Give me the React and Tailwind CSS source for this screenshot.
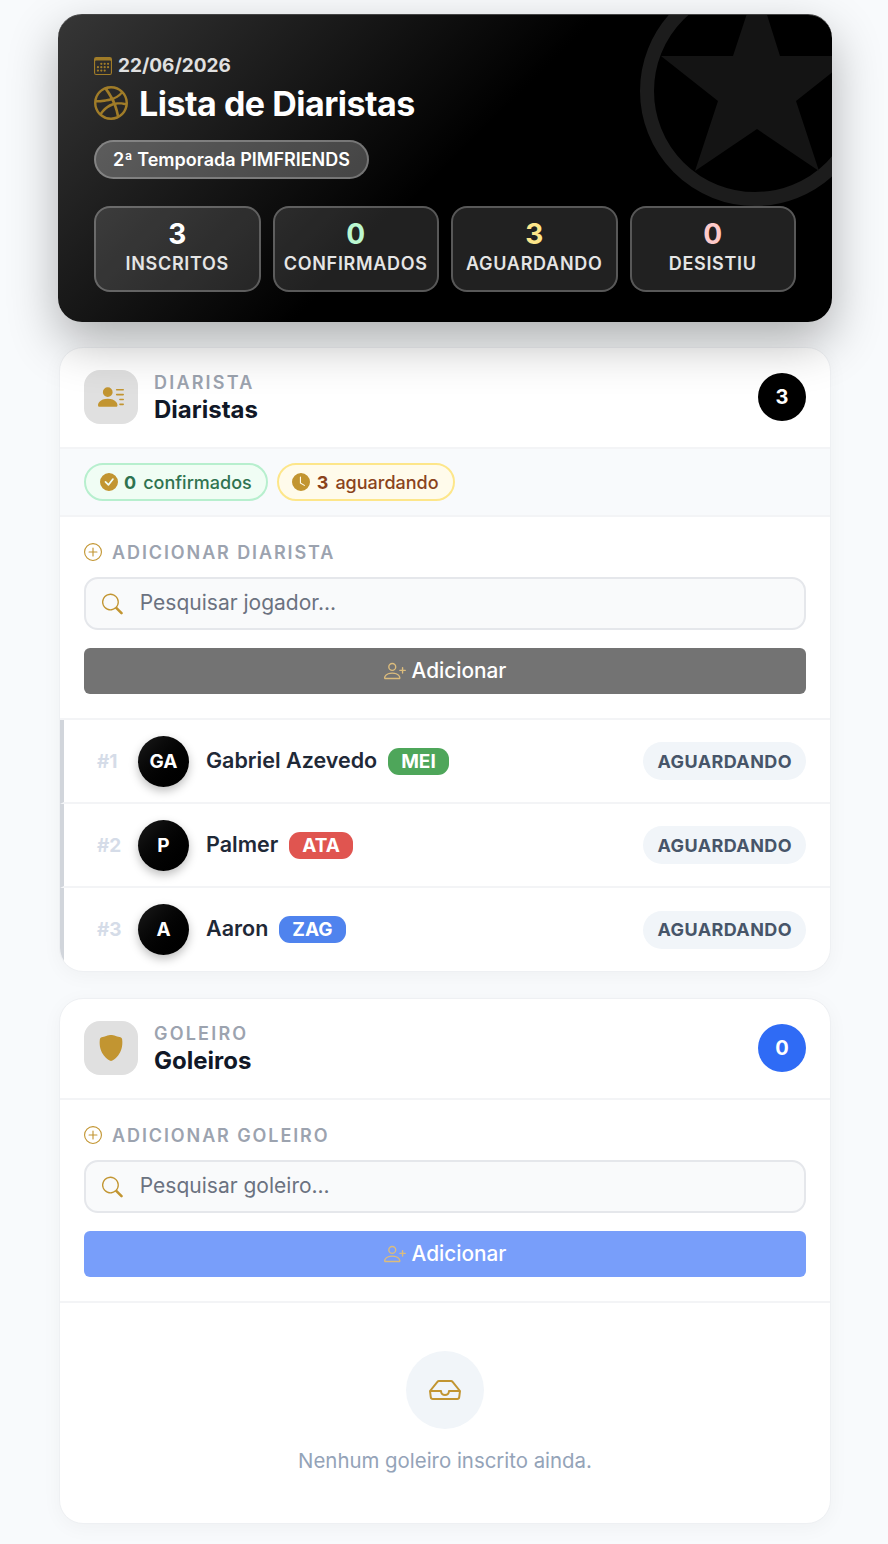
import {
  BsCalendar3,
  BsCheckCircleFill,
  BsClockFill,
  BsDribbble,
  BsInbox,
  BsPersonLinesFill,
  BsPersonPlus,
  BsPlusCircle,
  BsSearch,
  BsShieldFill,
} from "react-icons/bs";

const stats = [
  { value: "3", label: "INSCRITOS", color: "text-white" },
  { value: "0", label: "CONFIRMADOS", color: "text-[#bbf7d0]" },
  { value: "3", label: "AGUARDANDO", color: "text-[#fde68a]" },
  { value: "0", label: "DESISTIU", color: "text-[#fecaca]" },
];

const players = [
  { pos: "#1", initials: "GA", name: "Gabriel Azevedo", tag: "MEI", tagColor: "bg-[#4ea65a]" },
  { pos: "#2", initials: "P", name: "Palmer", tag: "ATA", tagColor: "bg-[#e05550]" },
  { pos: "#3", initials: "A", name: "Aaron", tag: "ZAG", tagColor: "bg-[#4f83ee]" },
];

function CardHeader({ icon, kicker, title, count, countColor }) {
  return (
    <div className="flex h-[101px] items-center justify-between border-b-2 border-[#f3f4f6] px-6 pb-px">
      <div className="flex items-center gap-4">
        <div className="flex h-[54px] w-[54px] items-center justify-center rounded-2xl bg-[#e0e0e0] text-[#c29531]">
          {icon}
        </div>
        <div className="pt-[2px]">
          <div className="text-[18px] leading-[24px] font-semibold tracking-[2.2px] text-[#9ca3af]">{kicker}</div>
          <div className="text-[24px] leading-[30px] font-bold text-[#111827]">{title}</div>
        </div>
      </div>
      <div className={`flex h-12 w-12 items-center justify-center rounded-full text-[20px] font-bold text-white ${countColor}`}>
        {count}
      </div>
    </div>
  );
}

function AddForm({ label, placeholder, buttonColor }) {
  return (
    <div className="border-b-2 border-[#f3f4f6] px-6 pt-[23px] pb-[24px]">
      <div className="flex h-[24px] items-center gap-[10px] text-[18px] font-semibold tracking-[1.9px] text-[#9ca3af]">
        <BsPlusCircle className="text-[18px] text-[#c29531]" />
        {label}
      </div>
      <div className="mt-[13px] flex h-[53px] items-center rounded-[14px] border-2 border-[#e5e7eb] bg-[#f9fafb] pl-4">
        <BsSearch className="h-[22px] w-[22px] text-[#c29531]" />
        <input
          className="ml-[17px] w-full bg-transparent pb-[2px] text-[21px] text-[#374151] outline-none placeholder:text-[#6b7280]"
          placeholder={placeholder}
        />
      </div>
      <button className={`mt-[18px] flex h-[46px] w-full items-center justify-center gap-[6px] rounded-[6px] text-[20.8px] font-medium text-white ${buttonColor}`}>
        <BsPersonPlus className="h-[22px] w-[22px] text-[#dcbc7c]" />
        Adicionar
      </button>
    </div>
  );
}

export default function App() {
  return (
    <div className="min-h-screen bg-[#f8fafc] pt-[14px] pr-[56px] pb-5 pl-[58px] font-['Inter',sans-serif]">
      {/* Hero */}
      <section className="relative h-[308px] overflow-hidden rounded-[24px] border-t border-[#444] bg-[linear-gradient(135deg,#363636_0%,#000_50%)] px-9 pt-[39px] shadow-[0_20px_50px_rgba(0,0,0,0.3)]">
        <svg className="absolute top-[-40px] left-[574px] h-[240px] w-[240px]" viewBox="632 -26 240 240">
          <circle cx="755" cy="90" r="108" fill="none" stroke="#1c1c1c" strokeWidth="14" />
          <polygon
            fill="#141414"
            points="757,-18 780,55 853,55 796,100 819,170 757,128 695,170 718,100 661,55 733,55"
          />
        </svg>
        <div className="relative">
          <div className="flex h-[24px] items-center gap-[6px] text-[19px] font-bold text-[#e0e0e0]">
            <BsCalendar3 className="h-[18px] w-[18px] text-[#a07c28]" />
            22/06/2026
          </div>
          <h1 className="mt-[4px] flex h-[42px] items-center gap-[11px] text-[34px] font-bold tracking-[-0.5px] text-white">
            <BsDribbble className="h-[34px] w-[34px] text-[#a07c28]" />
            Lista de Diaristas
          </h1>
          <div className="mt-[16px] inline-flex h-[39px] items-center rounded-full border-2 border-white/25 bg-white/25 px-[17px] text-[18px] font-semibold text-white">
            2ª Temporada PIMFRIENDS
          </div>
          <div className="mt-[27px] grid grid-cols-4 gap-3">
            {stats.map((s) => (
              <div
                key={s.label}
                className="flex h-[86px] flex-col items-center justify-center rounded-2xl border-2 border-white/25 bg-white/13 pb-[5px]"
              >
                <div className={`text-[28px] leading-[34px] font-bold ${s.color}`}>{s.value}</div>
                <div className="mt-[1px] text-[18px] leading-[24px] font-semibold tracking-[0.7px] whitespace-nowrap text-[#e5e5e5]">
                  {s.label}
                </div>
              </div>
            ))}
          </div>
        </div>
      </section>

      {/* Diaristas */}
      <section className="mx-px mt-[25px] overflow-hidden rounded-[24px] border border-[#eef0f3] bg-white shadow-[0_4px_20px_rgba(0,0,0,0.04)]">
        <CardHeader
          icon={<BsPersonLinesFill className="h-[26px] w-[26px]" />}
          kicker="DIARISTA"
          title="Diaristas"
          count="3"
          countColor="bg-black"
        />
        <div className="flex h-[68px] items-center gap-[9px] border-b-2 border-[#f3f4f6] bg-[#f8fafc] px-6">
          <div className="flex h-[38px] items-center gap-[7px] rounded-full border-2 border-[#b7efce] bg-[#f0fdf4] px-[14px] text-[18px] text-[#2f7350]">
            <BsCheckCircleFill className="mr-[-1px] h-[18px] w-[18px] text-[#c29531]" />
            <span className="font-bold">0</span>
            <span className="font-medium">confirmados</span>
          </div>
          <div className="flex h-[38px] items-center gap-[7px] rounded-full border-2 border-[#fde68a] bg-[#fffbeb] pr-[14px] pl-[13px] text-[18px] text-[#8a431c]">
            <BsClockFill className="h-[18px] w-[18px] text-[#c29531]" />
            <span className="font-bold">3</span>
            <span className="font-medium">aguardando</span>
          </div>
        </div>
        <AddForm label="ADICIONAR DIARISTA" placeholder="Pesquisar jogador..." buttonColor="bg-[#737373]" />
        {players.map((p, i) => (
          <div
            key={p.pos}
            className={`flex items-center border-l-4 border-[#d1d5db] pr-6 pl-[33px] ${i < 2 ? "h-[84px] border-b-2 border-b-[#f3f4f6]" : "h-[83px]"}`}
          >
            <span className="w-[41px] pt-[2px] text-[19px] font-bold text-[#d5dce8]">{p.pos}</span>
            <div className="flex h-[51px] w-[51px] items-center justify-center rounded-full bg-gradient-to-br from-[#1a1a1a] to-black pt-[2px] text-[19px] font-bold text-white shadow-[0_4px_10px_rgba(0,0,0,0.25)]">
              {p.initials}
            </div>
            <span className="mb-[2px] ml-[17px] text-[21.5px] font-semibold text-[#1f2937]">{p.name}</span>
            <span className={`ml-[11px] flex h-[27px] items-center rounded-[11px] px-[13px] pt-[2px] text-[19px] font-bold text-white ${p.tagColor}`}>
              {p.tag}
            </span>
            <span className="ml-auto flex h-[38px] items-center rounded-full bg-[#f1f5f9] px-[14px] text-[18px] font-bold tracking-[0.4px] text-[#475569]">
              AGUARDANDO
            </span>
          </div>
        ))}
      </section>

      {/* Goleiros */}
      <section className="mx-px mt-[26px] overflow-hidden rounded-[24px] border border-[#eef0f3] bg-white shadow-[0_4px_20px_rgba(0,0,0,0.04)]">
        <CardHeader
          icon={<BsShieldFill className="h-[26px] w-[26px]" />}
          kicker="GOLEIRO"
          title="Goleiros"
          count="0"
          countColor="bg-[#2f6bf5]"
        />
        <AddForm label="ADICIONAR GOLEIRO" placeholder="Pesquisar goleiro..." buttonColor="bg-[#789efa]" />
        <div className="flex flex-col items-center pt-[48px] pb-[47px]">
          <div className="flex h-[78px] w-[78px] items-center justify-center rounded-full bg-[#f1f5f9]">
            <BsInbox className="h-[32px] w-[32px] text-[#c29531]" />
          </div>
          <p className="mt-[17px] text-[20.4px] leading-[30px] text-[#94a3b8]">Nenhum goleiro inscrito ainda.</p>
        </div>
      </section>
    </div>
  );
}
